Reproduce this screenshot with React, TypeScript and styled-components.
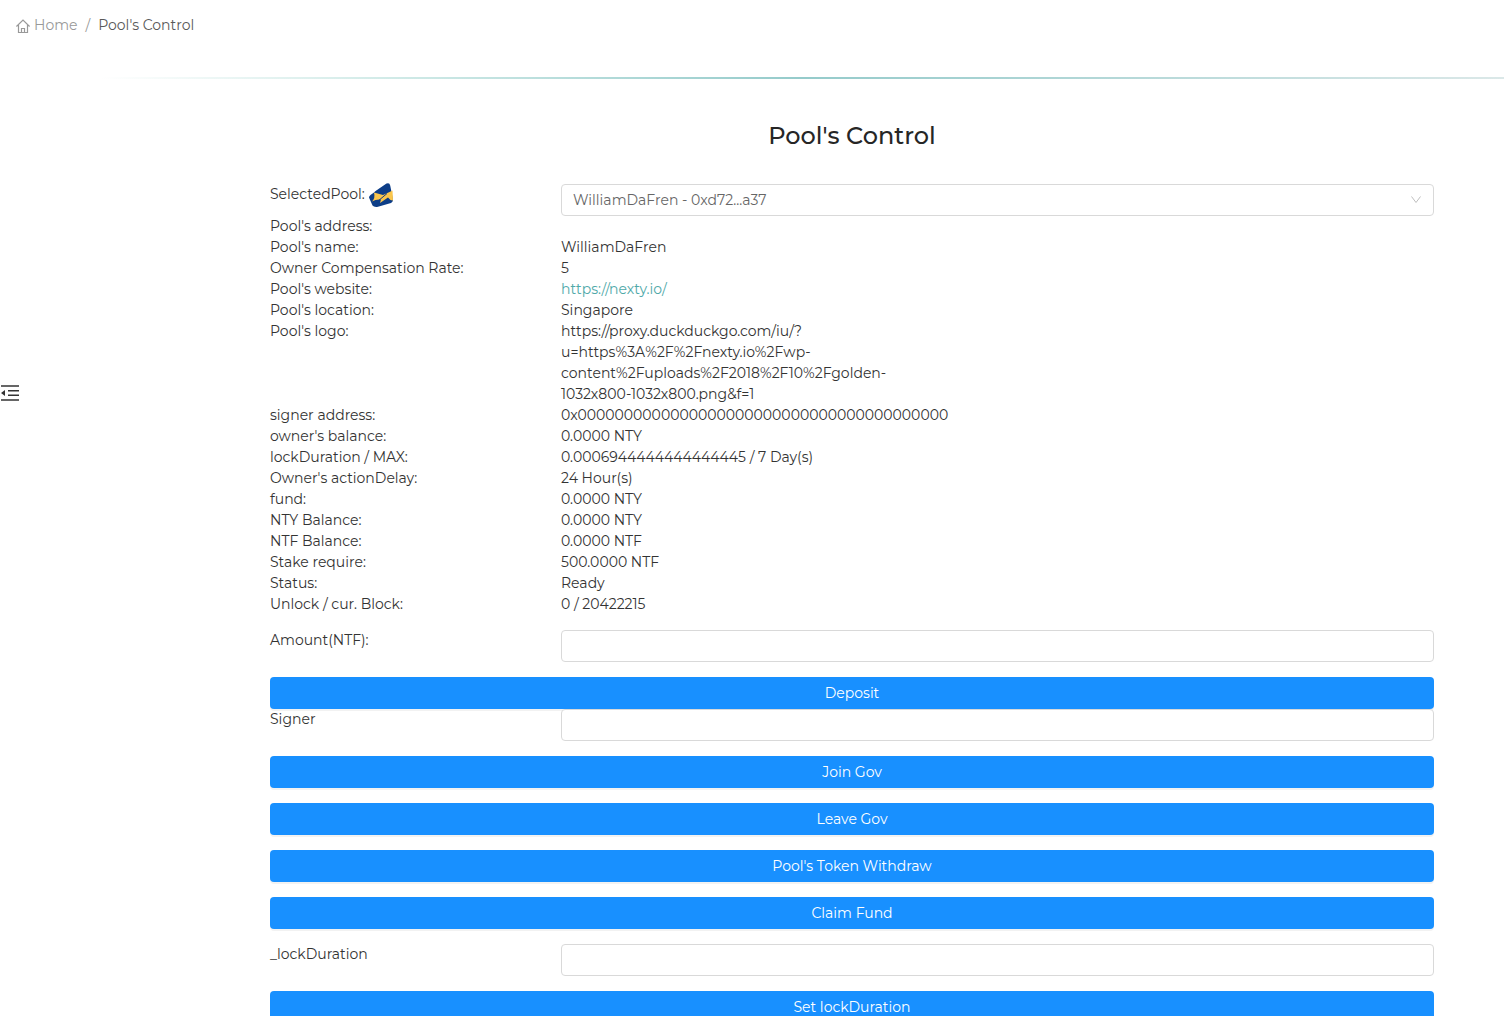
import React from "react";
import styled, { createGlobalStyle } from "styled-components";

const GlobalStyle = createGlobalStyle`
  *, *::before, *::after { box-sizing: border-box; }
  html { scrollbar-width: none; }
  body {
    margin: 0;
    background: #fff;
    color: #333;
    font-family: Montserrat, Inter, "Open Sans", sans-serif;
    font-size: 14px;
    font-weight: 400;
    line-height: 21px;
  }
`;

const Header = styled.header`
  padding: 15px 16px 41px;
`;

const Breadcrumb = styled.nav`
  display: flex;
  align-items: center;
  gap: 8px;
  color: #595959;
`;

const HomeLink = styled.a`
  display: flex;
  align-items: center;
  gap: 4px;
  color: #999;
  text-decoration: none;
`;

const Separator = styled.span`
  color: #999;
`;

const Divider = styled.hr`
  height: 2px;
  margin: 0 0 0 100px;
  border: 0;
  background: linear-gradient(to right, #fff, #d2ebe8 20%, #95cbcb 50%, #dbe8e8);
`;

const Body = styled.div`
  display: flex;
`;

const Sidebar = styled.aside`
  flex: 0 0 200px;
  padding-top: 304px;
`;

const MenuToggle = styled.button`
  display: flex;
  padding: 0;
  border: 0;
  background: none;
  color: #333;
  cursor: pointer;
`;

const Content = styled.main`
  flex: 1;
  min-width: 0;
  padding: 40px 70px 24px;
`;

const Title = styled.h1`
  margin: 0 0 32px;
  font-size: 24px;
  font-weight: 500;
  line-height: 33px;
  text-align: center;
  color: #262626;
`;

const FieldRow = styled.div<{ $spaced?: boolean }>`
  display: grid;
  grid-template-columns: 1fr 3fr;
  align-items: start;
  margin-bottom: ${(p) => (p.$spaced ? 15 : 0)}px;
`;

const FieldLabel = styled.label`
  display: flex;
  align-items: center;
  gap: 4px;
  height: 21px;
`;

const SelectBox = styled.div`
  display: grid;
  align-items: center;

  > * { grid-area: 1 / 1; }
  > svg { justify-self: end; margin-right: 12px; pointer-events: none; }
`;

const Select = styled.select`
  appearance: none;
  width: 100%;
  height: 32px;
  padding: 0 32px 0 11px;
  border: 1px solid #d9d9d9;
  border-radius: 4px;
  background: #fff;
  color: #666;
  font: inherit;
`;

const Input = styled.input`
  width: 100%;
  height: 32px;
  padding: 4px 11px;
  border: 1px solid #d9d9d9;
  border-radius: 4px;
  background: #fff;
  color: #595959;
  font: inherit;
`;

const Details = styled.dl`
  display: grid;
  grid-template-columns: 1fr 3fr;
  margin: 0 0 15px;
`;

const Term = styled.dt`
  min-height: 21px;
`;

const Value = styled.dd`
  margin: 0;
  width: 40%;
`;

const Link = styled.a`
  color: #4fa9a9;
  text-decoration: none;
`;

const ActionButton = styled.button<{ $tight?: boolean }>`
  display: block;
  width: 100%;
  height: 32px;
  margin-bottom: ${(p) => (p.$tight ? 0 : 15)}px;
  padding: 0 15px;
  border: 0;
  border-radius: 4px;
  background: #1890ff;
  box-shadow: 0 2px 0 rgba(0, 0, 0, 0.05);
  color: #fff;
  font: inherit;
  font-weight: 400;
  cursor: pointer;
`;

const HomeIcon = () => (
  <svg width="14" height="14" viewBox="0 0 14 14" fill="none" stroke="currentColor" strokeWidth="1.2" aria-hidden="true">
    <path d="M.4 7.500 7 1l6.600 6.500M2.500 6v7.500h9V6M5.500 13.500v-4h3v4" />
  </svg>
);

const ChevronIcon = () => (
  <svg width="12" height="12" viewBox="0 0 12 12" fill="none" stroke="#bfbfbf" aria-hidden="true">
    <path d="m1.500 2.500 4.500 6 4.500-6" />
  </svg>
);

const MenuIcon = () => (
  <svg width="20" height="20" viewBox="0 0 20 20" aria-hidden="true">
    <path d="M1 2h18v2H1zM1 16h18v2H1z" fill="#666" />
    <path d="M8 7h11v1.500H8zM8 11.500h11V13H8zM1 10l4-3v6z" fill="currentColor" />
  </svg>
);

const PoolLogo = () => (
  <svg width="24" height="24" viewBox="0 0 24 24" aria-hidden="true">
    <path d="M0 14.500Q0 13 1.500 12L5 9.500Q6 8 8 7L17.500.6Q20.500-.8 21.200 2.500L24 16.500Q24.200 19 22 20L9 23.800Q5 24.500 3.500 22.500Z" fill="#0d3d87" />
    <path d="M5 9.500 14 12 20.500 9 23.500 7.500 24 17.500Q21 17.500 19 14.500L11 20 12 16.500Q7 16 3 18.500Q6.500 15 5 9.500Z" fill="#fbc64c" />
    <path d="M18 10.500 8.500 18.500" fill="none" stroke="#0d3d87" strokeWidth="1" />
  </svg>
);

const details: [string, React.ReactNode][] = [
  ["Pool's address:", ""],
  ["Pool's name:", "WilliamDaFren"],
  ["Owner Compensation Rate:", "5"],
  ["Pool's website:", <Link href="https://nexty.io/">https://nexty.io/</Link>],
  ["Pool's location:", "Singapore"],
  [
    "Pool's logo:",
    "https://proxy.duckduckgo.com/iu/?u=https%3A%2F%2Fnexty.io%2Fwp-content%2Fuploads%2F2018%2F10%2Fgolden-1032x800-1032x800.png&f=1",
  ],
  ["signer address:", "0x0000000000000000000000000000000000000000"],
  ["owner's balance:", "0.0000 NTY"],
  ["lockDuration / MAX:", "0.0006944444444444445 / 7 Day(s)"],
  ["Owner's actionDelay:", "24 Hour(s)"],
  ["fund:", "0.0000 NTY"],
  ["NTY Balance:", "0.0000 NTY"],
  ["NTF Balance:", "0.0000 NTF"],
  ["Stake require:", "500.0000 NTF"],
  ["Status:", "Ready"],
  ["Unlock / cur. Block:", "0 / 20422215"],
];

const TextField = ({ id, label }: { id: string; label: string }) => (
  <FieldRow $spaced>
    <FieldLabel htmlFor={id}>{label}</FieldLabel>
    <Input id={id} type="text" />
  </FieldRow>
);

export default function App() {
  return (
    <>
      <GlobalStyle />
      <Header>
        <Breadcrumb aria-label="Breadcrumb">
          <HomeLink href="#">
            <HomeIcon />
            Home
          </HomeLink>
          <Separator>/</Separator>
          <span>Pool's Control</span>
        </Breadcrumb>
      </Header>
      <Divider />
      <Body>
        <Sidebar>
          <MenuToggle type="button" aria-label="Toggle menu">
            <MenuIcon />
          </MenuToggle>
        </Sidebar>
        <Content>
          <Title>Pool's Control</Title>
          <FieldRow>
            <FieldLabel htmlFor="pool">
              SelectedPool:
              <PoolLogo />
            </FieldLabel>
            <SelectBox>
              <Select id="pool">
                <option>WilliamDaFren - 0xd72...a37</option>
              </Select>
              <ChevronIcon />
            </SelectBox>
          </FieldRow>
          <Details>
            {details.map(([term, value]) => (
              <React.Fragment key={term}>
                <Term>{term}</Term>
                <Value>{value}</Value>
              </React.Fragment>
            ))}
          </Details>
          <TextField id="amount" label="Amount(NTF):" />
          <ActionButton $tight>Deposit</ActionButton>
          <TextField id="signer" label="Signer" />
          <ActionButton>Join Gov</ActionButton>
          <ActionButton>Leave Gov</ActionButton>
          <ActionButton>Pool's Token Withdraw</ActionButton>
          <ActionButton>Claim Fund</ActionButton>
          <TextField id="lock-duration" label="_lockDuration" />
          <ActionButton>Set lockDuration</ActionButton>
        </Content>
      </Body>
    </>
  );
}
